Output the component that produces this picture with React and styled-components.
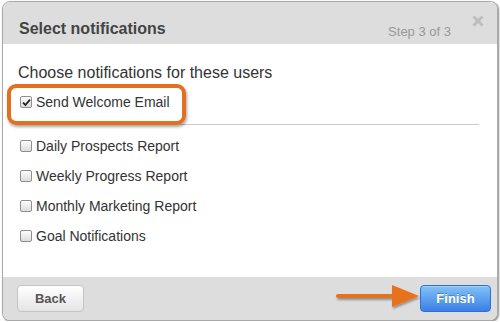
import React from "react";
import styled, { createGlobalStyle } from "styled-components";

const GlobalStyle = createGlobalStyle`
    html, body {
        margin: 0;
        padding: 0;
        background: #fff;
        font-family: "Liberation Sans", Arial, sans-serif;
    }
`;

const reportes = [
    { nombre: "Daily Prospects Report", marcado: false },
    { nombre: "Weekly Progress Report", marcado: false },
    { nombre: "Monthly Marketing Report", marcado: false },
    { nombre: "Goal Notifications", marcado: false },
];

export default function App() {
    return (
        <>
            <GlobalStyle />
            <Dialog>
                <Header>
                    <Titulo>Select notifications</Titulo>
                    <Paso>Step 3 of 3</Paso>
                    <Cerrar>
                        <svg width="12" height="12" viewBox="0 0 12 12">
                            <path d="M1.5 1.5 L10.5 10.5 M10.5 1.5 L1.5 10.5" stroke="#bdbdbd" strokeWidth="3" strokeLinecap="butt" />
                        </svg>
                    </Cerrar>
                </Header>
                <Cuerpo>
                    <Pregunta>Choose notifications for these users</Pregunta>
                    <FilaDestacada>
                        <Casilla marcado>
                            <svg width="9" height="9" viewBox="0 0 9 9">
                                <path d="M1 4.6 L3.4 7 L8 1.6" stroke="#222" strokeWidth="1.8" fill="none" />
                            </svg>
                        </Casilla>
                        <Etiqueta>Send Welcome Email</Etiqueta>
                        <Resaltado />
                    </FilaDestacada>
                    <Divisor />
                    {reportes.map((r, index) => (
                        <Fila key={index}>
                            <Casilla marcado={r.marcado} />
                            <Etiqueta>{r.nombre}</Etiqueta>
                        </Fila>
                    ))}
                </Cuerpo>
                <Pie>
                    <BotonAtras>Back</BotonAtras>
                    <Flecha>
                        <svg width="90" height="30" viewBox="0 0 90 30">
                            <defs>
                                <filter id="sombra" x="-10%" y="-30%" width="130%" height="170%">
                                    <feDropShadow dx="1" dy="2" stdDeviation="1.2" floodColor="#000" floodOpacity="0.35" />
                                </filter>
                            </defs>
                            <g filter="url(#sombra)">
                                <rect x="2" y="12" width="64" height="4" rx="2" fill="#e8711e" />
                                <path d="M58 3 L85 14 L58 25 Z" fill="#e8711e" />
                            </g>
                        </svg>
                    </Flecha>
                    <BotonFinalizar>Finish</BotonFinalizar>
                </Pie>
            </Dialog>
        </>
    );
}

const Dialog = styled.div`
    margin: 1px 0 0 2px;
    width: 494px;
    height: 318px;
    border: 1px solid #a9a9a9;
    border-radius: 8px;
    box-shadow: 1px 1px 2px rgba(0, 0, 0, 0.45);
    display: flex;
    flex-direction: column;
    overflow: hidden;
    background: #fff;
`;

const Header = styled.div`
    height: 42px;
    background: #dddddd;
    display: flex;
    align-items: flex-start;
    padding: 0 13px 0 16px;
    box-sizing: border-box;
`;

const Titulo = styled.div`
    font-size: 16px;
    font-weight: bold;
    color: #444;
    margin-top: 18px;
    flex: 1;
`;

const Paso = styled.div`
    font-size: 13px;
    color: #999;
    margin-top: 22px;
`;

const Cerrar = styled.div`
    margin: 13px 0 0 21px;
    width: 12px;
    height: 12px;
    display: flex;
`;

const Cuerpo = styled.div`
    flex: 1;
    padding: 19px 18px 0 15px;
    display: flex;
    flex-direction: column;
`;

const Pregunta = styled.div`
    font-size: 16px;
    line-height: 20px;
    color: #333;
`;

const Fila = styled.div`
    display: flex;
    align-items: center;
    height: 30px;
    padding-left: 2px;
`;

const FilaDestacada = styled(Fila)`
    position: relative;
    height: 24px;
    margin-top: 7px;
`;

const Resaltado = styled.div`
    position: absolute;
    left: -11px;
    top: -6px;
    width: 179px;
    height: 41px;
    box-sizing: border-box;
    border: 4px solid #e2701f;
    border-radius: 9px;
    box-shadow: 1px 2px 3px rgba(0, 0, 0, 0.35);
`;

const Casilla = styled.span`
    width: 10px;
    height: 10px;
    border: 1px solid #8f8f8f;
    border-radius: 2px;
    background: linear-gradient(#fdfdfd, #dcdcdc);
    display: flex;
    align-items: center;
    justify-content: center;
    margin-right: 4px;
    flex: none;
`;

const Etiqueta = styled.span`
    font-size: 14px;
    color: #333;
`;

const Divisor = styled.div`
    height: 1px;
    background: #cccccc;
    margin: 10px 0 6px 3px;
`;

const Pie = styled.div`
    position: relative;
    height: 43px;
    background: #dddddd;
    display: flex;
    align-items: center;
    justify-content: space-between;
    padding: 0 6px 0 14px;
    box-sizing: border-box;
`;

const Boton = styled.button`
    height: 27px;
    border-radius: 4px;
    font-family: "Liberation Sans", Arial, sans-serif;
    font-size: 13px;
    font-weight: bold;
    padding: 0;
    cursor: pointer;
`;

const BotonAtras = styled(Boton)`
    width: 67px;
    color: #555;
    border: 1px solid #c4c4c4;
    background: linear-gradient(#ffffff, #e4e4e4);
`;

const BotonFinalizar = styled(Boton)`
    width: 71px;
    color: #fff;
    border: 1px solid #2f6fd6;
    background: linear-gradient(#82c1f7, #3a80e6);
    text-shadow: 0 -1px 0 rgba(0, 0, 0, 0.25);
    box-shadow: inset 0 1px 0 rgba(255, 255, 255, 0.3);
`;

const Flecha = styled.div`
    position: absolute;
    left: 331px;
    top: 5px;
    width: 90px;
    height: 30px;
`;
